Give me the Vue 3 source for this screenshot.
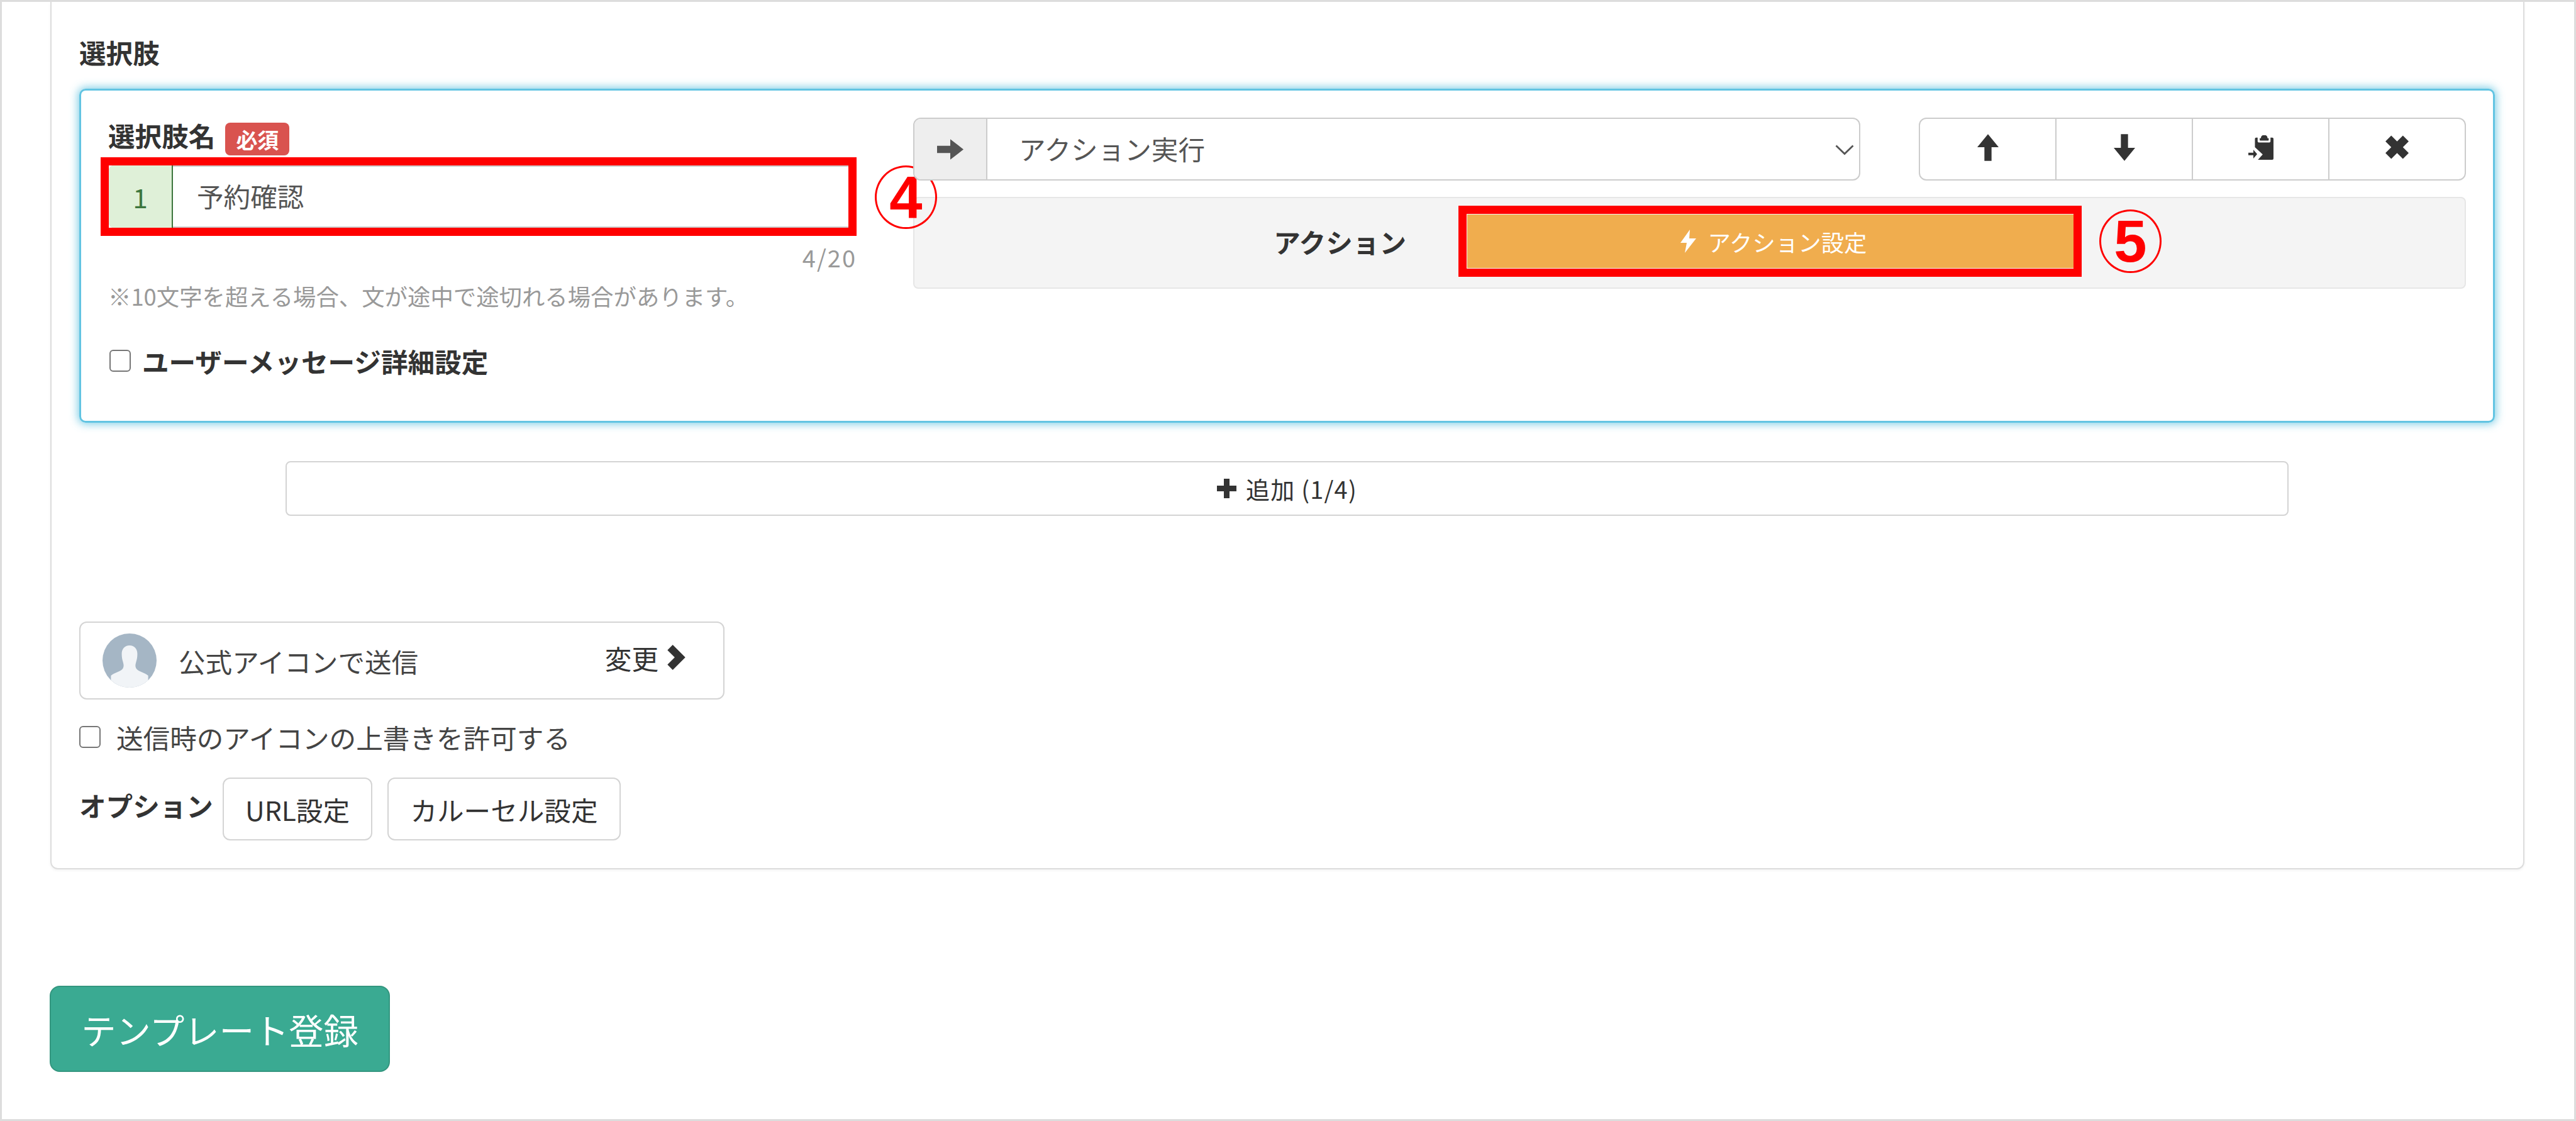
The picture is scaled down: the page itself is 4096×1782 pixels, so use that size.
<script setup>
const groupButtons = ['up', 'down', 'paste', 'remove']
</script>

<template>
  <div class="frame">
    <section class="card">
      <h2 class="title">選択肢</h2>
      <div class="choice">
        <div class="left">
          <div class="label-row">
            <span class="label">選択肢名</span>
            <span class="badge">必須</span>
          </div>
          <div class="input-wrap">
            <span class="prefix">1</span>
            <span class="input-text">予約確認</span>
            <span class="red-box"></span>
            <span class="mark mark-4">4</span>
          </div>
          <div class="count">4/20</div>
          <p class="note">※10文字を超える場合、文が途中で途切れる場合があります。</p>
          <label class="user-check">
            <input type="checkbox" class="check" />
            <span>ユーザーメッセージ詳細設定</span>
          </label>
        </div>
        <div class="right">
          <div class="top-row">
            <div class="select">
              <span class="addon">
                <svg width="42" height="33" viewBox="0 0 44 34"><path d="M0 11h22V0l22 17-22 17V23H0z" fill="#555" /></svg>
              </span>
              <span class="select-text">アクション実行</span>
              <svg class="caret" width="30" height="17" viewBox="0 0 30 17"><path d="M1.500 1.500L15 14.500 28.500 1.500" fill="none" stroke="#555" stroke-width="2.800" /></svg>
            </div>
            <div class="group">
              <button v-for="b in groupButtons" :key="b" class="group-btn" type="button">
                <svg v-if="b === 'up'" width="34" height="43" viewBox="0 0 36 45"><path d="M18 0l18 22H24v23H12V22H0z" fill="#333" /></svg>
                <svg v-else-if="b === 'down'" width="34" height="43" viewBox="0 0 36 45"><path d="M12 0h12v23h12L18 45 0 23h12z" fill="#333" /></svg>
                <svg v-else-if="b === 'paste'" width="40" height="39" viewBox="0 0 42 41">
                  <path d="M11 6q0-2 2-2h2.500v6q0 2 2 2H35q2 0 2-2V4h3q2 0 2 2v33q0 2-2 2H16l8-9-13-12z" fill="#333" />
                  <path d="M21 5q0-4 3-5h5q3 1 3 5h2v3q0 1-1 1H20q-1 0-1-1V5z" fill="#333" />
                  <path d="M0 29.300h8.400v-5l6.300 7.300L8.400 39v-5.700H0z" fill="#333" />
                </svg>
                <svg v-else width="37" height="38" viewBox="0 0 36 36"><path d="M9 0l9 9 9-9 9 9-9 9 9 9-9 9-9-9-9 9-9-9 9-9-9-9z" fill="#333" /></svg>
              </button>
            </div>
          </div>
          <div class="action-panel">
            <span class="action-label">アクション</span>
            <div class="action-btn">
              <svg width="25" height="37" viewBox="0 0 25 37"><path d="M15 0L0 21h10L7 37l18-23H14z" fill="#fff" /></svg>
              <span>アクション設定</span>
              <span class="red-box red-box-action"></span>
              <span class="mark mark-5">5</span>
            </div>
          </div>
        </div>
      </div>

      <button class="add" type="button">
        <svg width="31" height="31" viewBox="0 0 31 31"><path d="M11 0h9v11h11v9H20v11h-9V20H0v-9h11z" fill="#333" /></svg>
        <span>追加 (1/4)</span>
      </button>

      <div class="sender">
        <svg class="avatar" width="86" height="86" viewBox="0 0 90 90">
          <path d="M45 20c-8 0-13 6-13 14 0 6 1 10 2 13 1 4 2 7 0 11-3 5-14 7-20 12v20h62V70c-6-5-17-7-20-12-2-4-1-7 0-11 1-3 2-7 2-13 0-8-5-14-13-14z" fill="#f1f4f7" />
        </svg>
        <span class="sender-text">公式アイコンで送信</span>
        <span class="change">
          <span>変更</span>
          <svg width="29" height="40" viewBox="0 0 27 38"><path d="M8 0l19 19L8 38l-8-8 11-11L0 8z" fill="#333" /></svg>
        </span>
      </div>

      <label class="override">
        <input type="checkbox" class="check" />
        <span>送信時のアイコンの上書きを許可する</span>
      </label>

      <div class="options">
        <span class="options-label">オプション</span>
        <button class="opt opt-url" type="button">URL設定</button>
        <button class="opt opt-carousel" type="button">カルーセル設定</button>
      </div>
    </section>

    <button class="submit" type="button">テンプレート登録</button>
  </div>
</template>

<style>
html, body { margin: 0; background: #fff; }
</style>

<style scoped>
* { box-sizing: border-box; }
.frame {
  width: 4096px;
  height: 1782px;
  border: 3px solid #ddd;
  background: #fff;
  overflow: hidden;
  font-family: "Noto Sans CJK JP", "Noto Sans", sans-serif;
  font-size: 42.600px;
  color: #333;
}
.card {
  width: 3934px;
  height: 1379px;
  margin-left: 77px;
  padding: 50px 45px 0 44px;
  border: 2px solid #ddd;
  border-top: 0;
  border-radius: 0 0 12px 12px;
  box-shadow: 0 2px 4px rgba(0, 0, 0, .05);
}
.title {
  margin: 0 0 28px;
  font-size: 42.600px;
  line-height: 60px;
  font-weight: 700;
}
.choice {
  display: flex;
  gap: 93px;
  height: 531px;
  padding: 43px 43px 0 43px;
  border: 3px solid #62c4e2;
  border-radius: 10px;
  box-shadow: 0 0 14px 2px rgba(91, 192, 222, .8);
}
.left { width: 1187px; flex: none; }
.label-row {
  display: flex;
  align-items: center;
  gap: 16px;
  height: 60px;
  margin-bottom: 18px;
  margin-top: -2px;
}
.label { font-weight: 700; line-height: 60px; }
.badge {
  display: flex;
  align-items: center;
  justify-content: center;
  width: 102px;
  height: 52px;
  margin-top: 12px;
  border-radius: 8px;
  background: #d9534f;
  color: #fff;
  font-size: 34px;
  font-weight: 700;
}
.input-wrap {
  position: relative;
  display: flex;
  align-items: center;
  height: 99px;
  margin-left: 1px;
  padding-bottom: 5px;
  border: 2px solid #ccc;
  border-radius: 8px;
  color: #555;
}
.prefix {
  display: flex;
  align-items: center;
  justify-content: center;
  align-self: stretch;
  width: 102px;
  margin: -2px 0 -7px -2px;
  border-right: 2px solid #3c763d;
  border-radius: 8px 0 0 8px;
  background: #dff0d8;
  color: #3c763d;
}
.input-text { margin-left: 38px; }
.red-box {
  position: absolute;
  top: -15px;
  left: -15px;
  right: -5px;
  bottom: -15px;
  border: 13.500px solid #f00;
}
.mark {
  position: absolute;
  display: flex;
  align-items: center;
  justify-content: center;
  width: 99px;
  height: 101px;
  border: 3.500px solid #f00;
  border-radius: 50%;
  color: #f00;
  font-family: "Liberation Sans", sans-serif;
  font-size: 94px;
  font-weight: 700;
  line-height: 1;
}
.mark-4 { left: 1216px; top: -2px; }
.mark-5 { left: calc(100% + 41px); top: -8px; }
.count {
  margin: 22px -3px 0 0;
  text-align: right;
  font-size: 38px;
  letter-spacing: 2px;
  line-height: 50px;
  color: #999;
}
.note {
  margin: 11px 0 0;
  font-size: 36.400px;
  line-height: 50px;
  color: #999;
}
.user-check {
  display: flex;
  align-items: center;
  gap: 18px;
  height: 50px;
  margin-top: 53px;
  font-weight: 700;
}
.check {
  flex: none;
  appearance: none;
  width: 34px;
  height: 35px;
  margin: 0;
  border: 2.500px solid #767676;
  border-radius: 6px;
  background: #fff;
}
.user-check .check { margin-left: 2px; }
.right { flex: 1; min-width: 0; }
.top-row { display: flex; justify-content: space-between; }
.select {
  position: relative;
  display: flex;
  align-items: center;
  width: 1506px;
  height: 100px;
  border: 2px solid #ccc;
  border-radius: 12px;
  color: #555;
}
.addon {
  display: flex;
  align-items: center;
  justify-content: center;
  align-self: stretch;
  width: 116px;
  border-right: 2px solid #ccc;
  border-radius: 10px 0 0 10px;
  background: #eee;
}
.select-text { margin-left: 50px; padding-bottom: 3px; }
.caret { position: absolute; right: 8px; top: 41px; }
.group {
  display: flex;
  width: 870px;
  height: 100px;
  border: 2px solid #ccc;
  border-radius: 12px;
}
.group-btn {
  flex: 1;
  display: flex;
  align-items: center;
  justify-content: center;
  padding: 0 0 6px;
  border: 0;
  border-right: 2px solid #ccc;
  background: transparent;
}
.group-btn:last-child { border-right: 0; }
.action-panel {
  display: flex;
  height: 146px;
  margin-top: 26px;
  padding-top: 26px;
  border: 2px solid #e6e6e6;
  border-radius: 8px;
  background: #f4f4f4;
}
.action-label {
  width: 782px;
  padding-top: 12px;
  text-align: right;
  font-weight: 700;
}
.action-btn {
  position: relative;
  display: flex;
  align-items: center;
  justify-content: center;
  gap: 19px;
  width: 964px;
  height: 85px;
  margin-left: 97px;
  padding-left: 10px;
  background: #f0ad4e;
  color: #fff;
  font-size: 36.400px;
}
.red-box-action { top: -14px; left: -14px; right: -13px; bottom: -14px; }
.add {
  display: flex;
  align-items: center;
  justify-content: center;
  gap: 15px;
  width: 3185px;
  height: 87px;
  margin: 61px auto 0;
  border: 2px solid #d4d4d4;
  border-radius: 8px;
  background: #fff;
  color: #333;
  font: inherit;
  font-size: 38px;
  letter-spacing: 1.200px;
}
.sender {
  display: flex;
  align-items: center;
  width: 1026px;
  height: 124px;
  margin-top: 168px;
  padding: 0 60px 0 35px;
  border: 2px solid #d4d4d4;
  border-radius: 12px;
}
.avatar { flex: none; border-radius: 50%; background: #a5b6c5; }
.sender-text { margin-left: 35px; color: #444; }
.change {
  display: flex;
  align-items: center;
  gap: 14px;
  margin: -10px 0 0 auto;
}
.override {
  display: flex;
  align-items: center;
  gap: 25px;
  height: 60px;
  margin-top: 29px;
  color: #444;
}
.options {
  display: flex;
  align-items: center;
  margin-top: 35px;
}
.options-label { margin: -14px 15px 0 0; font-weight: 700; }
.opt {
  height: 100px;
  padding: 0;
  border: 2px solid #d4d4d4;
  border-radius: 12px;
  background: #fff;
  color: #333;
  font: inherit;
}
.opt-url { width: 238px; }
.opt-carousel { width: 371px; margin-left: 24px; }
.submit {
  display: block;
  width: 541px;
  height: 137px;
  margin: 185px 0 0 76px;
  border: 2px solid #33967f;
  border-radius: 16px;
  background: #3aaa92;
  color: #fff;
  font: inherit;
  font-size: 55.300px;
}
</style>
